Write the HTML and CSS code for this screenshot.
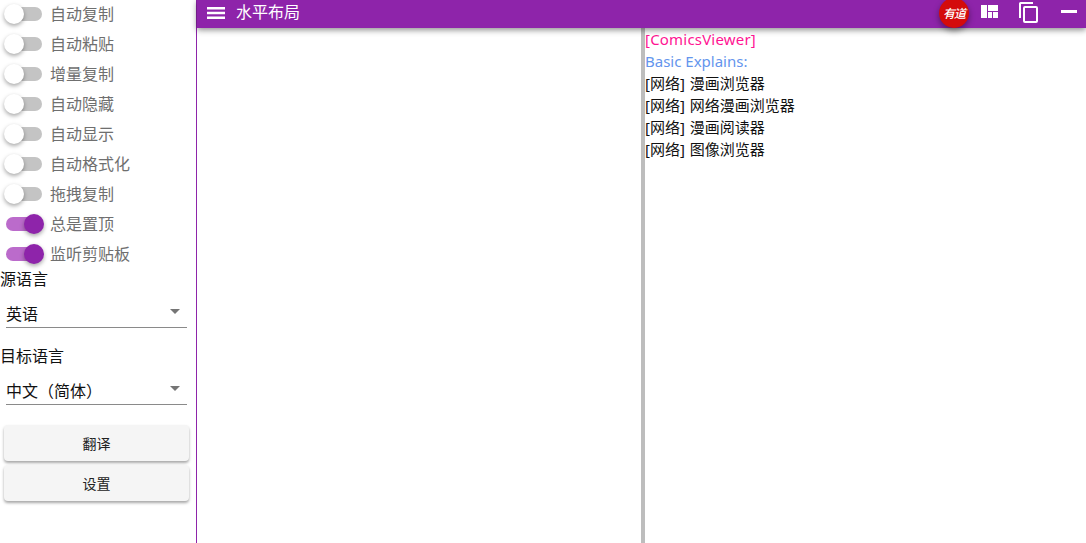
FILE: index.html
```html
<!DOCTYPE html>
<html lang="zh">

<head>
    <meta charset="UTF-8">
    <meta name="viewport" content="width=device-width, initial-scale=1.0">
    <title>水平布局</title>
    <link rel="stylesheet" href="styles.css">
</head>

<body>
    <aside class="sidebar">
        <div class="switch-row"><span class="switch"></span><span class="switch-label">自动复制</span></div>
        <div class="switch-row"><span class="switch"></span><span class="switch-label">自动粘贴</span></div>
        <div class="switch-row"><span class="switch"></span><span class="switch-label">增量复制</span></div>
        <div class="switch-row"><span class="switch"></span><span class="switch-label">自动隐藏</span></div>
        <div class="switch-row"><span class="switch"></span><span class="switch-label">自动显示</span></div>
        <div class="switch-row"><span class="switch"></span><span class="switch-label">自动格式化</span></div>
        <div class="switch-row"><span class="switch"></span><span class="switch-label">拖拽复制</span></div>
        <div class="switch-row"><span class="switch on"></span><span class="switch-label">总是置顶</span></div>
        <div class="switch-row"><span class="switch on"></span><span class="switch-label">监听剪贴板</span></div>

        <div class="field">
            <div class="field-label">源语言</div>
            <div class="select"><span>英语</span><i class="arrow"></i></div>
        </div>
        <div class="field">
            <div class="field-label">目标语言</div>
            <div class="select"><span>中文（简体）</span><i class="arrow"></i></div>
        </div>

        <div class="actions">
            <button>翻译</button>
            <button>设置</button>
        </div>
    </aside>

    <main class="main">
        <header class="toolbar">
            <svg class="menu-icon" width="18" height="12" viewBox="0 0 18 12">
                <path d="M0 0h18v2.5H0zM0 4.75h18v2.500H0zM0 9.500h18V12H0z" fill="#fff" />
            </svg>
            <span class="title">水平布局</span>
            <span class="youdao">有道</span>
            <svg class="tool-icon dash" width="17" height="13" viewBox="0 0 17 13">
                <path d="M0 0h6v13H0zM7 0h10v6H7zM7 7h4v6H7zM12 7h5v6h-5z" fill="#fff" />
            </svg>
            <svg class="tool-icon copy" width="19" height="21" viewBox="0 0 19 21">
                <path d="M14 0H1.500A1.500 1.500 0 0 0 0 1.500V16h2V2h12z" fill="#fff" />
                <path d="M17 4H6a2 2 0 0 0-2 2v13a2 2 0 0 0 2 2h11a2 2 0 0 0 2-2V6a2 2 0 0 0-2-2zm0 15H6V6h11z" fill="#fff" />
            </svg>
            <svg class="tool-icon minus" width="16" height="3" viewBox="0 0 16 3">
                <path d="M0 0h16v3H0z" fill="#fff" />
            </svg>
        </header>
        <div class="panes">
            <div class="pane left"></div>
            <div class="pane right">
                <div class="word">[ComicsViewer]</div>
                <div class="explain">Basic Explains:</div>
                <div class="meaning">[网络] 漫画浏览器</div>
                <div class="meaning">[网络] 网络漫画浏览器</div>
                <div class="meaning">[网络] 漫画阅读器</div>
                <div class="meaning">[网络] 图像浏览器</div>
            </div>
        </div>
    </main>
</body>

</html>
```

FILE: styles.css
```css
* {
    box-sizing: border-box;
}

html,
body {
    height: 100%;
}

body {
    display: flex;
    margin: 0;
    overflow: hidden;
    background: #fff;
    font-family: "Noto Sans", "Noto Sans CJK SC", sans-serif;
    font-size: 15px;
    color: #111;
}

/* Sidebar */
.sidebar {
    width: 197px;
    flex-shrink: 0;
    margin-top: -1px;
    border-right: 1px solid #8e24aa;
}

.switch-row {
    display: flex;
    align-items: center;
    height: 30px;
}

.switch {
    position: relative;
    width: 36px;
    height: 14px;
    margin-left: 6px;
    border-radius: 7px;
    background: #c4c4c4;
}

.switch::after {
    content: "";
    position: absolute;
    top: -3px;
    left: -2px;
    width: 20px;
    height: 20px;
    border-radius: 50%;
    background: #fff;
    box-shadow: 0 2px 4px rgba(0, 0, 0, 0.35);
}

.switch.on {
    background: #bb6bcb;
}

.switch.on::after {
    left: 18px;
    background: #8e24aa;
}

.switch-label {
    margin-left: 8px;
    padding-bottom: 1px;
    font-size: 16px;
    line-height: 22px;
    color: #6f6f6f;
}

.field-label {
    height: 18px;
    font-size: 16px;
    line-height: 20px;
}

.select {
    display: flex;
    align-items: center;
    justify-content: space-between;
    height: 32px;
    margin: 9px 9px 0 6px;
    padding-top: 2px;
    border-bottom: 1px solid #8a8a8a;
    font-size: 16px;
}

.arrow {
    width: 0;
    height: 0;
    margin: -3px 7px 0 0;
    border-left: 5px solid transparent;
    border-right: 5px solid transparent;
    border-top: 5px solid #757575;
}

.field {
    margin-bottom: 18px;
}

.actions {
    display: flex;
    flex-direction: column;
    gap: 4px;
    margin: 20px 7px 0 4px;
}

button {
    height: 36px;
    border: none;
    border-radius: 4px;
    background: #f5f5f5;
    box-shadow: 0 2px 3px rgba(0, 0, 0, 0.35);
    font-family: inherit;
    font-size: 14px;
    color: #222;
}

/* Main area */
.main {
    flex: 1;
    display: flex;
    flex-direction: column;
    min-width: 0;
}

.toolbar {
    display: flex;
    align-items: center;
    flex-shrink: 0;
    position: relative;
    height: 28px;
    padding-left: 10px;
    background: #8e24aa;
    box-shadow: 0 2px 6px rgba(0, 0, 0, 0.45);
    color: #fff;
}

.menu-icon {
    margin-top: -3px;
}

.title {
    flex: 1;
    margin-left: 11px;
    padding-bottom: 5px;
    font-size: 16px;
    line-height: 22px;
}

.youdao {
    display: flex;
    align-items: center;
    justify-content: center;
    flex-shrink: 0;
    width: 30px;
    height: 30px;
    margin: -2px 12px 0 0;
    border-radius: 50%;
    background: #d40b0b;
    box-shadow: 0 3px 6px rgba(0, 0, 0, 0.4);
    font-size: 12px;
    font-style: italic;
    font-weight: 500;
    letter-spacing: -1px;
}

.tool-icon.dash {
    margin: -5px 21px 0 0;
}

.tool-icon.copy {
    margin: -3px 23px 0 0;
}

.tool-icon.minus {
    margin: -5px 9px 0 0;
}

.panes {
    flex: 1;
    display: flex;
    min-height: 0;
}

.pane.left {
    width: 448px;
    border-right: 4px solid #bdbdbd;
}

.pane.right {
    flex: 1;
    line-height: 22px;
    color: #111;
}

.word {
    color: #ff1493;
    letter-spacing: 0.2px;
}

.explain {
    color: #6495ed;
}

.meaning {
    word-spacing: 1px;
}
```
